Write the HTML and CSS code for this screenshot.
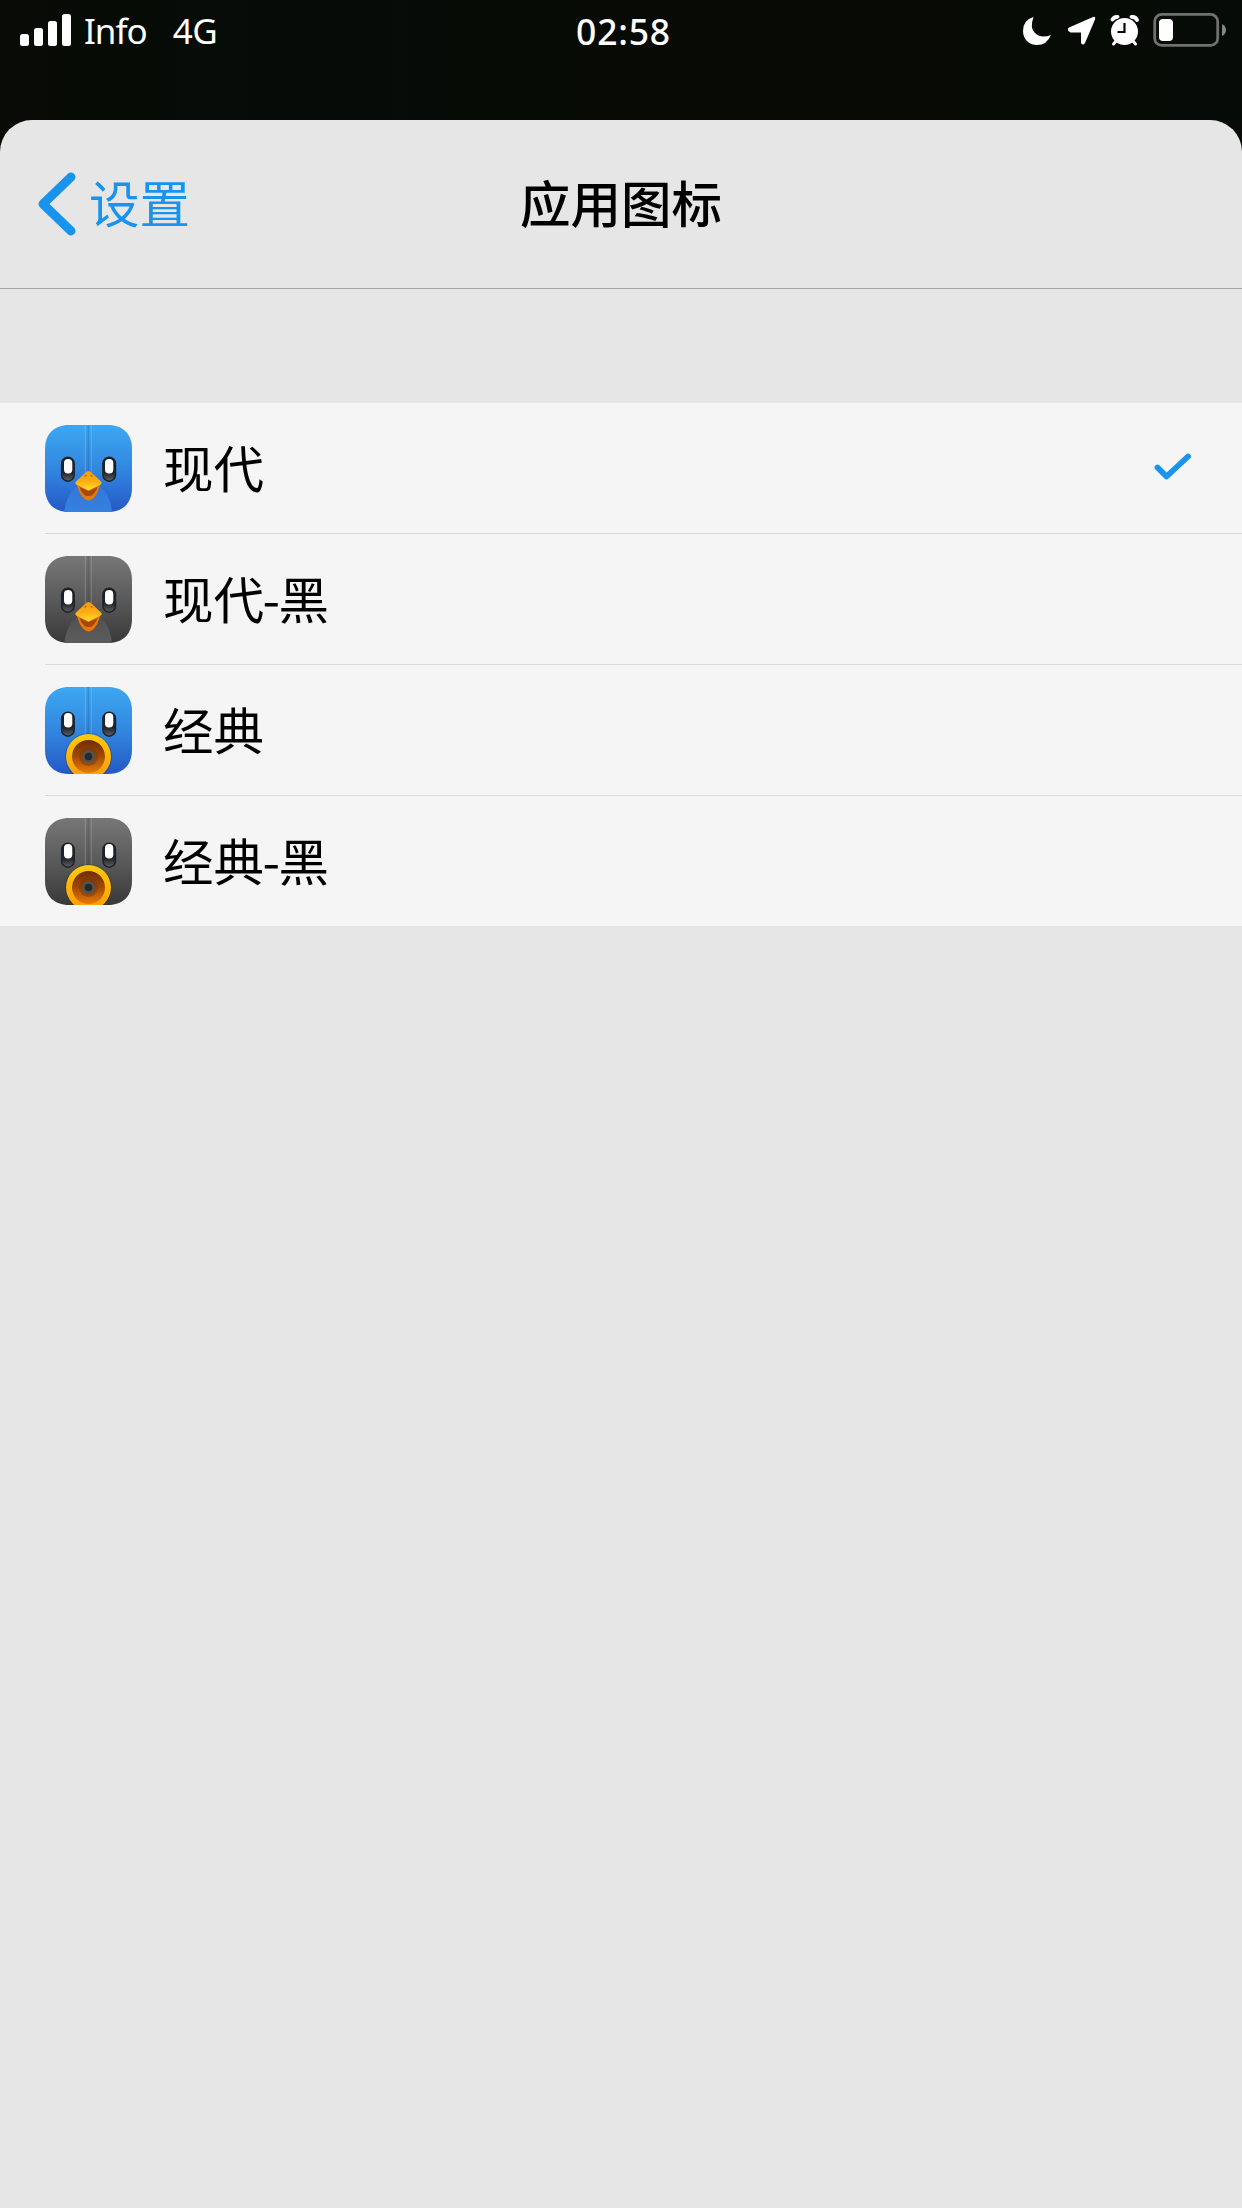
FILE: index.html
```html
<!DOCTYPE html>
<html lang="zh-CN">
<head>
<meta charset="utf-8">
<title>应用图标</title>
<link rel="stylesheet" href="styles.css">
</head>
<body>
<svg class="defs" width="0" height="0" aria-hidden="true">
  <defs>
    <linearGradient id="blue" x1="0" y1="0" x2="0" y2="1"><stop offset="0" stop-color="#3da7f2"/><stop offset=".5" stop-color="#3287e0"/><stop offset="1" stop-color="#2558c6"/></linearGradient>
    <linearGradient id="black" x1="0" y1="0" x2="0" y2="1"><stop offset="0" stop-color="#777"/><stop offset=".5" stop-color="#5a5a5a"/><stop offset="1" stop-color="#393939"/></linearGradient>
    <linearGradient id="bellyBlue" x1="0" y1="0" x2="0" y2="1"><stop offset="0" stop-color="#3275d7"/><stop offset="1" stop-color="#3482df"/></linearGradient>
    <linearGradient id="bellyBlack" x1="0" y1="0" x2="0" y2="1"><stop offset="0" stop-color="#505050"/><stop offset="1" stop-color="#5c5c5c"/></linearGradient>
    <linearGradient id="socket" x1="0" y1="0" x2="0" y2="1"><stop offset="0" stop-color="#151b22"/><stop offset=".65" stop-color="#22262c"/><stop offset="1" stop-color="#606266"/></linearGradient>
    <linearGradient id="beak" x1="0" y1="0" x2="0" y2="1"><stop offset="0" stop-color="#f59a12"/><stop offset=".55" stop-color="#fcae14"/><stop offset="1" stop-color="#ffe02c"/></linearGradient>
    <linearGradient id="ring" x1="0" y1="0" x2="0" y2="1"><stop offset="0" stop-color="#ffca0a"/><stop offset="1" stop-color="#ff9c08"/></linearGradient>
    <linearGradient id="horn" x1="0" y1="0" x2="0" y2="1"><stop offset="0" stop-color="#6f2c08"/><stop offset=".5" stop-color="#a24a05"/><stop offset="1" stop-color="#ea7a06"/></linearGradient>
    <clipPath id="tile"><path d="M24 0H63C78 0 87 9 87 24V63C87 78 78 87 63 87H24C9 87 0 78 0 63V24C0 9 9 0 24 0Z"/></clipPath>
    <g id="seam">
      <path d="M40.300 0V48M46.300 0V48" stroke="#fff" stroke-opacity=".16" stroke-width="1.200"/>
      <path d="M43.300 0V48" stroke="#000" stroke-opacity=".12" stroke-width="1.600"/>
    </g>
    <g id="eyes">
      <rect x="16.600" y="32.200" width="12.600" height="24" rx="6.300" fill="url(#socket)" stroke="#1d2228" stroke-width="1.400"/>
      <rect x="57.900" y="32.200" width="12.600" height="24" rx="6.300" fill="url(#socket)" stroke="#1d2228" stroke-width="1.400"/>
    </g>
    <g id="pupils">
      <rect x="19" y="34" width="8.300" height="14.500" rx="4.100" fill="#fff"/>
      <rect x="60" y="34" width="8.300" height="14.500" rx="4.100" fill="#fff"/>
    </g>
    <g id="bill">
      <path d="M31.500 59L35 68.500Q39.500 75.500 43.500 75.500Q47.500 75.500 52 68.500L55.500 59Z" fill="#e97809"/>
      <path d="M34.500 62L43.500 66L52.500 62Q51 68 43.500 73Q36 68 34.500 62Z" fill="#a44708"/>
      <path d="M38 69.500Q43.500 72.500 49 69.500L43.500 74Z" fill="#e27812"/>
      <path d="M43.500 46Q46 46 48.500 49.500L56 56.500Q57.500 58.500 55.500 59.500L43.500 65.500L31.500 59.500Q29.500 58.500 31 56.500L38.500 49.500Q41 46 43.500 46Z" fill="url(#beak)"/>
      <path d="M39.500 51.500L41.500 50M47.500 51.500L45.500 50" stroke="#b96907" stroke-width="1.500"/>
    </g>
    <g id="speaker">
      <circle cx="43.500" cy="69.500" r="23.500" fill="#000" opacity=".18"/>
      <circle cx="43.500" cy="69.500" r="22.500" fill="url(#ring)"/>
      <circle cx="43.500" cy="69.500" r="16.500" fill="url(#horn)"/>
      <circle cx="43.500" cy="69.500" r="9.500" fill="#74370b" opacity=".5"/>
      <circle cx="43.500" cy="69.500" r="6.300" fill="#555350"/>
      <circle cx="43.500" cy="69.500" r="3.800" fill="#252a2e"/>
    </g>
  </defs>
</svg>
<header class="status">
  <div class="status-left">
    <svg class="signal" width="51" height="32" viewBox="0 0 51 32" fill="#fff"><rect y="20" width="9" height="12" rx="2.500"/><rect x="14" y="14" width="9" height="18" rx="2.500"/><rect x="28" y="7" width="9" height="25" rx="2.500"/><rect x="42" y="0" width="9" height="32" rx="2.500"/></svg>
    <span class="carrier">Info</span>
    <span class="network">4G</span>
  </div>
  <time class="clock">02:58</time>
  <svg class="indicators" width="204" height="34" viewBox="0 0 204 34">
    <path d="M10.500 4Q6.500 15 12 20Q18 26 28 22Q24 32 14 32C6 32 0 26 0 18Q0 7 10.500 4Z" fill="#fff"/>
    <path d="M46 14.500L70 4Q73 3 72 6.500L62 30Q60 33 58 30V19.500H47.500Q43 17 46 14.500Z" fill="#fff"/>
    <path d="M89.500 6.500Q91.500 3.500 94.500 4M108.500 4Q112.500 3.500 114 7" stroke="#fff" stroke-width="4" stroke-linecap="round" fill="none"/>
    <circle cx="101.500" cy="18.500" r="14.500" fill="#050905"/>
    <circle cx="101.500" cy="18.500" r="13.500" fill="#fff"/>
    <path d="M93 28L90.500 31M110 28L112.500 31" stroke="#fff" stroke-width="3" stroke-linecap="round"/>
    <path d="M101.500 10V19H94.500" fill="none" stroke="#050905" stroke-width="2.200"/>
    <rect x="131.700" y="1.400" width="63" height="31" rx="7" fill="none" stroke="#6f716f" stroke-width="2.800"/>
    <rect x="136" y="6" width="14" height="22" rx="4" fill="#fff"/>
    <path d="M199 11Q203 13 203 17Q203 21 199 23Z" fill="#858785"/>
  </svg>
</header>
<main class="sheet">
  <nav class="navbar">
    <a class="back"><svg width="38" height="64" viewBox="0 0 38 64"><path d="M33 5L5 32L33 59" fill="none" stroke="#1893ee" stroke-width="9" stroke-linecap="round" stroke-linejoin="round"/></svg><span class="label">设置</span></a>
    <h1 class="title">应用图标</h1>
  </nav>
  <ul class="list">
    <li class="row">
      <svg class="app-icon" viewBox="0 0 87 87"><g clip-path="url(#tile)"><rect width="87" height="87" fill="url(#blue)"/><path d="M19 87Q23 60 43.500 56Q64 60 67 87Z" fill="url(#bellyBlue)"/><use href="#seam"/><use href="#eyes"/><use href="#pupils"/><use href="#bill"/></g></svg>
      <div class="cell"><span class="label">现代</span><svg class="check" width="38" height="28" viewBox="0 0 38 28"><path d="M3.500 14.500L12.500 23.500L34 3.500" fill="none" stroke="#1893ee" stroke-width="5.800" stroke-linecap="round" stroke-linejoin="round"/></svg></div>
    </li>
    <li class="row">
      <svg class="app-icon" viewBox="0 0 87 87"><g clip-path="url(#tile)"><rect width="87" height="87" fill="url(#black)"/><path d="M19 87Q23 60 43.500 56Q64 60 67 87Z" fill="url(#bellyBlack)"/><use href="#seam"/><use href="#eyes"/><use href="#pupils"/><use href="#bill"/></g></svg>
      <div class="cell"><span class="label">现代<span class="dash">-</span>黑</span></div>
    </li>
    <li class="row">
      <svg class="app-icon" viewBox="0 0 87 87"><g clip-path="url(#tile)"><rect width="87" height="87" fill="url(#blue)"/><use href="#seam"/><use href="#eyes" y="-7"/><use href="#pupils" y="-8"/><use href="#speaker"/></g></svg>
      <div class="cell"><span class="label">经典</span></div>
    </li>
    <li class="row">
      <svg class="app-icon" viewBox="0 0 87 87"><g clip-path="url(#tile)"><rect width="87" height="87" fill="url(#black)"/><use href="#seam"/><use href="#eyes" y="-7"/><use href="#pupils" y="-8"/><use href="#speaker"/></g></svg>
      <div class="cell"><span class="label">经典<span class="dash">-</span>黑</span></div>
    </li>
  </ul>
</main>
</body>
</html>
```
FILE: styles.css
```css
* { box-sizing: border-box; }
body {
  margin: 0;
  height: 2208px;
  display: flex;
  flex-direction: column;
  background: #080b06;
  font-family: "Noto Sans CJK SC", sans-serif;
  color: #000;
}
.defs { position: absolute; }
.status {
  height: 120px;
  flex: none;
  display: grid;
  grid-template-columns: 1fr auto 1fr;
  align-items: start;
  padding: 0 15px 0 20px;
  background: linear-gradient(90deg, #080b06, #050c07 25%, #080a04 60%, #050b06);
  color: #fff;
  font: 35px/62px "Noto Sans", sans-serif;
}
.status-left { display: flex; }
.signal { margin-top: 14px; }
.carrier { margin-left: 13px; letter-spacing: -1px; }
.network { margin-left: 26px; letter-spacing: -0.5px; }
.clock { font-size: 35.5px; font-weight: 500; letter-spacing: 0.8px; }
.indicators { justify-self: end; margin-top: 13px; }
.sheet {
  flex: 1;
  background: #e6e6e6;
  border-radius: 32px 32px 0 0;
}
.navbar {
  height: 169px;
  display: grid;
  grid-template-columns: 1fr auto 1fr;
  align-items: center;
  border-bottom: 1px solid #a5a5a5;
}
.back {
  display: flex;
  align-items: center;
  gap: 13px;
  padding-left: 38px;
  color: #1893ee;
  font-size: 50.5px;
  line-height: 72px;
}
.title {
  margin: 0;
  padding-bottom: 7px;
  font-size: 50.5px;
  font-weight: 500;
  line-height: 72px;
}
.label { padding-bottom: 6px; }
.list {
  list-style: none;
  margin: 114px 0 0;
  padding: 0 0 0 45px;
  background: #f5f5f5;
}
.row { height: 131px; display: flex; align-items: center; gap: 31px; }
.row + .row { box-shadow: 0 -1px #d9d9d9; }
.row:last-child { margin-bottom: -1px; }
.list { overflow: hidden; }
.app-icon { width: 87px; height: 87px; flex: none; }
.cell {
  flex: 1;
  height: 100%;
  display: flex;
  align-items: center;
  justify-content: space-between;
  padding-right: 50px;
  font-size: 50.5px;
  line-height: 72px;
}
.check { margin-bottom: 3px; }
.dash { margin: 0 -1.5px; }
```
